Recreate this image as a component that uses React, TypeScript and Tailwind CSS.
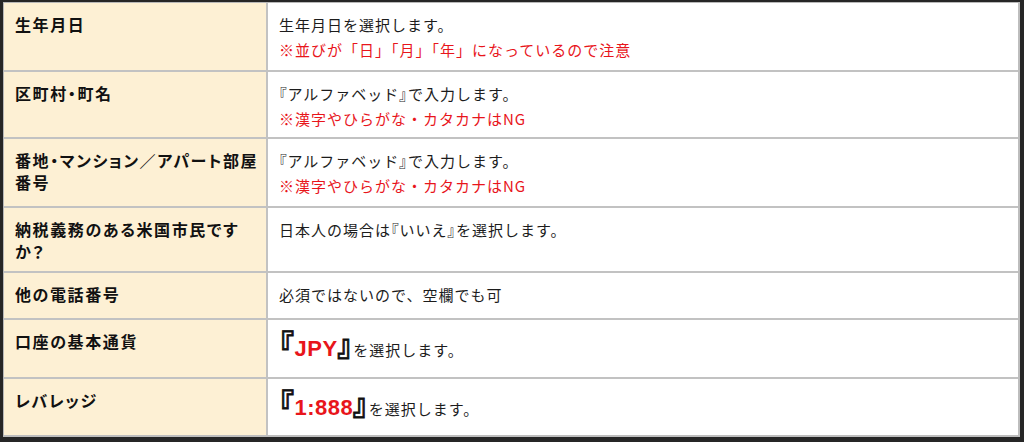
import type { ReactNode } from 'react'

type Row = {
  label: ReactNode
  body: ReactNode
  h: string
}

const jp = "font-['Noto_Sans_CJK_JP','Noto_Sans',sans-serif]"

function Bracketed({ value, rest }: { value: string; rest: string }) {
  return (
    <div className="-mt-[2px] flex h-[32px] items-baseline leading-[32px]">
      <span className="text-[29px] font-black text-[#111] [font-feature-settings:'palt'] [-webkit-text-stroke:0.8px_#111]">
        『
      </span>
      <span className="font-['Liberation_Sans',Arial,sans-serif] text-[22px] font-bold tracking-[0.5px] text-[#e8151b]">
        {value}
      </span>
      <span className="text-[29px] font-black text-[#111] [font-feature-settings:'palt'] [-webkit-text-stroke:0.8px_#111]">
        』
      </span>
      <span>{rest}</span>
    </div>
  )
}

const Open = () => <span className="[font-feature-settings:'palt']">『</span>
const Close = () => <span className="[font-feature-settings:'palt']">』</span>

const rows: Row[] = [
  {
    label: '生年月日',
    body: (
      <>
        <div>生年月日を選択します。</div>
        <div className="text-[#e8151b]">※並びが「日」「月」「年」になっているので注意</div>
      </>
    ),
    h: 'h-[69px]',
  },
  {
    label: '区町村・町名',
    body: (
      <>
        <div>
          <Open />
          アルファベッド
          <Close />
          で入力します。
        </div>
        <div className="text-[#e8151b]">※漢字やひらがな・カタカナはNG</div>
      </>
    ),
    h: 'h-[67px]',
  },
  {
    label: (
      <>
        番地・マンション／アパート部屋
        <br />
        番号
      </>
    ),
    body: (
      <>
        <div>
          <Open />
          アルファベッド
          <Close />
          で入力します。
        </div>
        <div className="text-[#e8151b]">※漢字やひらがな・カタカナはNG</div>
      </>
    ),
    h: 'h-[69px]',
  },
  {
    label: (
      <>
        納税義務のある米国市民です
        <br />
        か？
      </>
    ),
    body: (
      <div>
        日本人の場合は
        <Open />
        いいえ
        <Close />
        を選択します。
      </div>
    ),
    h: 'h-[65px]',
  },
  {
    label: '他の電話番号',
    body: <div>必須ではないので、空欄でも可</div>,
    h: 'h-[47px]',
  },
  {
    label: '口座の基本通貨',
    body: <Bracketed value="JPY" rest="を選択します。" />,
    h: 'h-[59px]',
  },
  {
    label: 'レバレッジ',
    body: <Bracketed value="1:888" rest="を選択します。" />,
    h: 'h-[58px]',
  },
]

export default function App() {
  return (
    <div className={`h-[442px] w-[1024px] bg-[#262626] pt-[2px] pr-[4px] pb-[5px] pl-[3px] ${jp}`}>
      <div className="flex h-full flex-col border-t border-l border-r-2 border-b-2 border-t-[#b8b8b8] border-l-[#b8b8b8] border-r-[#bdbdbd] border-b-[#bdbdbd] bg-white">
        {rows.map((row, i) => (
          <div
            key={i}
            className={`flex shrink-0 ${row.h} ${i < rows.length - 1 ? 'border-b-2 border-[#c2c2c2]' : 'flex-1'}`}
          >
            <div className="w-[264px] shrink-0 border-r-2 border-[#c2c2c2] bg-[#fdf0d4] pt-[10px] pl-[11px] text-[16px] font-bold leading-[22px] tracking-[1.6px] whitespace-nowrap text-[#111] [font-feature-settings:'palt']">
              {row.label}
            </div>
            <div className="flex-1 pt-[9px] pl-[11px] text-[15px] leading-[25px] tracking-[1px] text-[#1c1c1c]">
              {row.body}
            </div>
          </div>
        ))}
      </div>
    </div>
  )
}
